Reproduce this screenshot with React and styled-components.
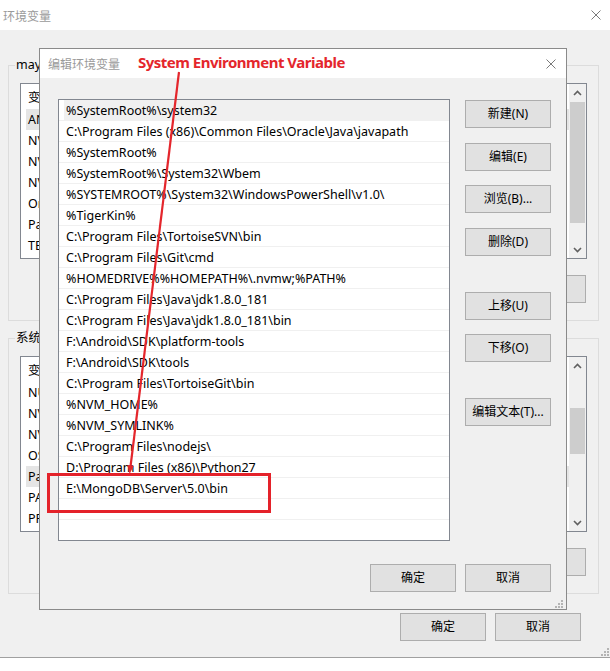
import React from "react";
import styled, { createGlobalStyle } from "styled-components";

const GlobalStyle = createGlobalStyle`
  html, body { margin: 0; padding: 0; background: #ffffff; }
  body {
    width: 610px; height: 671px; overflow: hidden;
    font-family: "Noto Sans", "Noto Sans CJK SC", sans-serif;
    font-size: 12px; color: #000;
  }
  * { box-sizing: border-box; }
`;

const Desktop = styled.div`
  position: relative;
  width: 610px;
  height: 671px;
  background: #fff;
`;

const Window = styled.div`
  width: 610px;
  display: flex;
  flex-direction: column;
  border-bottom: 1px solid #a0a0a0;
`;

const TitleBar = styled.div`
  height: ${(p) => p.$h}px;
  flex: none;
  background: #fff;
  display: flex;
  align-items: center;
  justify-content: space-between;
  padding: ${(p) => p.$pad};
  color: #9a9a9a;
  font-family: "Noto Sans CJK SC", sans-serif;
  font-size: 12px;
`;

const WindowBody = styled.div`
  position: relative;
  background: #f0f0f0;
  height: 627px;
  padding: 35px 11px 16px 8px;
  display: flex;
  flex-direction: column;
`;

const GroupBox = styled.div`
  position: relative;
  height: 256px;
  border: 1px solid #dcdcdc;
  padding: 17px 11px 17px 11px;
  margin-bottom: ${(p) => p.$mb || 0}px;
  display: flex;
  flex-direction: column;
`;

const Legend = styled.span`
  position: absolute;
  top: -9px;
  left: 6px;
  padding: 0 1px;
  line-height: 16px;
  font-size: 12.5px;
  background: #f0f0f0;
  font-family: "Noto Sans", "Noto Sans CJK SC", sans-serif;
`;

const ListBox = styled.div`
  height: 176px;
  border: 1px solid #828790;
  background: #fff;
  display: flex;
  overflow: hidden;
`;

const ListContent = styled.div`
  flex: 1;
  display: flex;
  flex-direction: column;
  overflow: hidden;
  font-size: 12.5px;
`;

const ListHeader = styled.div`
  height: 25px;
  display: flex;
  align-items: center;
  padding-left: 7px;
  flex: none;
  font-family: "Noto Sans CJK SC", sans-serif;
`;

const VarRow = styled.div`
  height: 21px;
  flex: none;
  display: flex;
  align-items: center;
  padding-left: 5px;
`;

const VarCell = styled.div`
  flex: 1;
  height: 100%;
  display: flex;
  align-items: center;
  padding-left: 2px;
  white-space: nowrap;
  background: ${(p) => (p.$sel ? "#e5e5e5" : "transparent")};
`;

const ScrollBar = styled.div`
  width: 17px;
  flex: none;
  background: #f0f0f0;
  display: flex;
  flex-direction: column;
`;

const ScrollArrow = styled.div`
  height: 17px;
  flex: none;
  display: flex;
  align-items: center;
  justify-content: center;
`;

const Track = styled.div`
  flex: 1;
  display: flex;
  flex-direction: column;
  padding: 0 1px;
`;

const Thumb = styled.div`
  background: #cdcdcd;
  margin-top: ${(p) => p.$offset}px;
  height: ${(p) => p.$size}px;
`;

const ButtonRow = styled.div`
  display: flex;
  justify-content: flex-end;
  gap: ${(p) => p.$gap || 9}px;
  margin-top: ${(p) => p.$mt || 0}px;
  padding-right: ${(p) => p.$pr || 0}px;
`;

const Button = styled.button`
  width: ${(p) => p.$w || 86}px;
  height: 28px;
  flex: none;
  margin: 0;
  margin-top: ${(p) => p.$mt || 0}px;
  padding: 0;
  background: #e1e1e1;
  border: 1px solid #adadad;
  color: #000;
  font-family: "Noto Sans", "Noto Sans CJK SC", sans-serif;
  font-size: 12px;
  line-height: 16px;
  white-space: nowrap;
`;

const Dialog = styled.div`
  position: absolute;
  left: 39px;
  top: 48px;
  width: 528px;
  height: 562px;
  border: 1px solid #8a8a8a;
  background: #f0f0f0;
  display: flex;
  flex-direction: column;
`;

const DialogBody = styled.div`
  position: relative;
  flex: 1;
  padding: 21px 15px 17px 18px;
  display: grid;
  grid-template-columns: 392px 86px;
  grid-template-rows: 442px 28px;
  column-gap: 15px;
  row-gap: 23px;
`;

const PathList = styled.div`
  border: 1px solid #828790;
  background: #fff;
  overflow: hidden;
  display: flex;
  flex-direction: column;
  font-size: 12.5px;
`;

const PathRow = styled.div`
  height: 21px;
  flex: none;
  display: flex;
  padding-left: 5px;
  border-bottom: 1px solid #f0f0f0;
`;

const PathCell = styled.div`
  flex: 1;
  display: flex;
  align-items: center;
  padding-left: 2px;
  white-space: nowrap;
  background: ${(p) => (p.$sel ? "#f0f0f0" : "transparent")};
`;

const SideButtons = styled.div`
  display: flex;
  flex-direction: column;
`;

const FooterRow = styled(ButtonRow)`
  grid-column: 1 / span 2;
`;

const Grip = styled.svg`
  position: absolute;
  right: ${(p) => p.$r}px;
  bottom: ${(p) => p.$b}px;
`;

const Overlay = styled.svg`
  position: absolute;
  left: 0;
  top: 0;
  pointer-events: none;
`;

const Annotation = styled.div`
  position: absolute;
  left: 138px;
  top: 51px;
  color: #e4262c;
  font-family: "Noto Sans", sans-serif;
  font-weight: 700;
  font-size: 15px;
  letter-spacing: -0.5px;
  line-height: 22px;
  white-space: nowrap;
`;

const Highlight = styled.div`
  position: absolute;
  left: 47px;
  top: 473px;
  width: 224px;
  height: 40px;
  border: 3px solid #e4222a;
`;

const CloseIcon = () => (
  <svg width="10" height="10" viewBox="0 0 10 10">
    <path d="M0.5 0.5 L9.5 9.5 M9.5 0.5 L0.5 9.5" stroke="#7a7a7a" strokeWidth="1" fill="none" />
  </svg>
);

const Chevron = ({ up }) => (
  <svg width="9" height="6" viewBox="0 0 9 6">
    <path
      d={up ? "M1 5 L4.5 1.5 L8 5" : "M1 1 L4.5 4.5 L8 1"}
      stroke="#606060"
      strokeWidth="1.6"
      fill="none"
    />
  </svg>
);

const GripDots = ({ r, b }) => (
  <Grip $r={r} $b={b} width="8" height="8" viewBox="0 0 8 8">
    {[
      [6, 0],
      [3, 3],
      [6, 3],
      [0, 6],
      [3, 6],
      [6, 6],
    ].map(([x, y]) => (
      <rect key={`${x}-${y}`} x={x} y={y} width="2" height="2" fill="#b4b4b4" />
    ))}
  </Grip>
);

const VarList = ({ rows, selected, thumbOffset, thumbSize }) => (
  <ListBox>
    <ListContent>
      <ListHeader>变量</ListHeader>
      {rows.map((r, i) => (
        <VarRow key={i}>
          <VarCell $sel={i === selected}>{r}</VarCell>
        </VarRow>
      ))}
    </ListContent>
    <ScrollBar>
      <ScrollArrow>
        <Chevron up />
      </ScrollArrow>
      <Track>
        <Thumb $offset={thumbOffset} $size={thumbSize} />
      </Track>
      <ScrollArrow>
        <Chevron />
      </ScrollArrow>
    </ScrollBar>
  </ListBox>
);

const userVars = ["ANDROID_HOME", "NVM_HOME", "NVM_SYMLINK", "NVS_HOME", "OneDrive", "Path", "TEMP"];
const sysVars = ["NUMBER_OF_PROCESSORS", "NVM_HOME", "NVM_SYMLINK", "OS", "Path", "PATHEXT", "PROCESSOR_ARCHITECTURE"];

const paths = [
  "%SystemRoot%\\system32",
  "C:\\Program Files (x86)\\Common Files\\Oracle\\Java\\javapath",
  "%SystemRoot%",
  "%SystemRoot%\\System32\\Wbem",
  "%SYSTEMROOT%\\System32\\WindowsPowerShell\\v1.0\\",
  "%TigerKin%",
  "C:\\Program Files\\TortoiseSVN\\bin",
  "C:\\Program Files\\Git\\cmd",
  "%HOMEDRIVE%%HOMEPATH%\\.nvmw;%PATH%",
  "C:\\Program Files\\Java\\jdk1.8.0_181",
  "C:\\Program Files\\Java\\jdk1.8.0_181\\bin",
  "F:\\Android\\SDK\\platform-tools",
  "F:\\Android\\SDK\\tools",
  "C:\\Program Files\\TortoiseGit\\bin",
  "%NVM_HOME%",
  "%NVM_SYMLINK%",
  "C:\\Program Files\\nodejs\\",
  "D:\\Program Files (x86)\\Python27",
  "E:\\MongoDB\\Server\\5.0\\bin",
  "",
  "",
];

const sideButtons = [
  { label: "新建(N)", mt: 1 },
  { label: "编辑(E)", mt: 15 },
  { label: "浏览(B)...", mt: 14 },
  { label: "删除(D)", mt: 15 },
  { label: "上移(U)", mt: 36 },
  { label: "下移(O)", mt: 14 },
  { label: "编辑文本(T)...", mt: 36 },
];

export default function App() {
  return (
    <Desktop>
      <GlobalStyle />
      <Window>
        <TitleBar $h={30} $pad="0 9px 0 3px">
          <span>环境变量</span>
          <CloseIcon />
        </TitleBar>
        <WindowBody>
          <GroupBox $mb={17}>
            <Legend>maybe 的用户变量(U)</Legend>
            <VarList rows={userVars} selected={0} thumbOffset={1} thumbSize={121} />
            <ButtonRow $mt={16} $gap={9} $pr={1}>
              <Button $w={92}>新建(N)...</Button>
              <Button $w={92}>编辑(E)...</Button>
              <Button $w={92}>删除(D)</Button>
            </ButtonRow>
          </GroupBox>
          <GroupBox>
            <Legend>系统变量(S)</Legend>
            <VarList rows={sysVars} selected={4} thumbOffset={34} thumbSize={46} />
            <ButtonRow $mt={16} $gap={9} $pr={1}>
              <Button $w={92}>新建(W)...</Button>
              <Button $w={92}>编辑(I)...</Button>
              <Button $w={92}>删除(L)</Button>
            </ButtonRow>
          </GroupBox>
          <ButtonRow $mt={19} $gap={9} $pr={18}>
            <Button>确定</Button>
            <Button>取消</Button>
          </ButtonRow>
          <GripDots r={1} b={1} />
        </WindowBody>
      </Window>

      <Dialog>
        <TitleBar $h={29} $pad="0 10px 0 8px">
          <span>编辑环境变量</span>
          <CloseIcon />
        </TitleBar>
        <DialogBody>
          <PathList>
            {paths.map((p, i) => (
              <PathRow key={i}>
                <PathCell $sel={i === 0}>{p}</PathCell>
              </PathRow>
            ))}
          </PathList>
          <SideButtons>
            {sideButtons.map((b) => (
              <Button key={b.label} $mt={b.mt}>
                {b.label}
              </Button>
            ))}
          </SideButtons>
          <FooterRow $gap={9}>
            <Button>确定</Button>
            <Button>取消</Button>
          </FooterRow>
          <GripDots r={3} b={1} />
        </DialogBody>
      </Dialog>

      <Annotation>System Environment Variable</Annotation>
      <Highlight />
      <Overlay width="610" height="671" viewBox="0 0 610 671">
        <line x1="179" y1="72" x2="130.6" y2="466" stroke="#e4262c" strokeWidth="2.2" />
        <polygon points="129.6,474 133.8,465.8 127.4,465" fill="#e4262c" />
      </Overlay>
    </Desktop>
  );
}
